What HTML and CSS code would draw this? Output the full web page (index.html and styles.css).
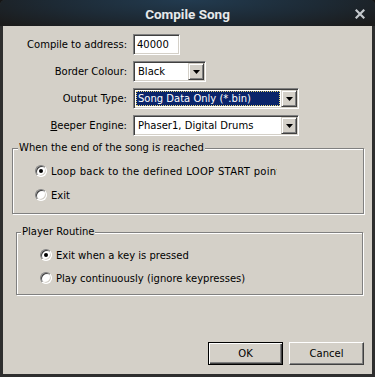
FILE: index.html
```html
<!DOCTYPE html>
<html lang="en">
<head>
    <meta charset="UTF-8">
    <meta name="viewport" content="width=device-width, initial-scale=1.0">
    <title>Compile Song</title>
    <link rel="stylesheet" href="styles.css">
</head>
<body>
    <div class="window">
        <div class="titlebar">
            <span class="title">Compile Song</span>
            <svg class="close" width="10" height="10" viewBox="0 0 10 10">
                <path d="M1.5 1.5 L8.5 8.5 M8.5 1.5 L1.5 8.5" stroke="#c4c8cc" stroke-width="2.2" stroke-linecap="square"/>
            </svg>
        </div>

        <div class="client">
            <div class="fields">
                <label class="field-label">Compile to address:</label>
                <div class="edit">40000</div>

                <label class="field-label">Border Colour:</label>
                <div class="combo combo-short">
                    <span class="combo-value">Black</span>
                    <span class="combo-btn"><svg width="7" height="4" viewBox="0 0 7 4"><path d="M0 0 H7 L3.5 4 Z" fill="#000"/></svg></span>
                </div>

                <label class="field-label">Output Type:</label>
                <div class="combo combo-long">
                    <span class="combo-value selected">Song Data Only (*.bin)</span>
                    <span class="combo-btn"><svg width="7" height="4" viewBox="0 0 7 4"><path d="M0 0 H7 L3.5 4 Z" fill="#000"/></svg></span>
                </div>

                <label class="field-label"><u>B</u>eeper Engine:</label>
                <div class="combo combo-long">
                    <span class="combo-value">Phaser1, Digital Drums</span>
                    <span class="combo-btn"><svg width="7" height="4" viewBox="0 0 7 4"><path d="M0 0 H7 L3.5 4 Z" fill="#000"/></svg></span>
                </div>
            </div>

            <fieldset class="group group-end">
                <legend>When the end of the song is reached</legend>
                <div class="options">
                    <div class="option"><span class="radio checked"></span><span class="option-text clipped">Loop back to the defined LOOP START point</span></div>
                    <div class="option"><span class="radio"></span><span class="option-text">Exit</span></div>
                </div>
            </fieldset>

            <fieldset class="group group-player">
                <legend>Player Routine</legend>
                <div class="options">
                    <div class="option"><span class="radio checked"></span><span class="option-text">Exit when a key is pressed</span></div>
                    <div class="option"><span class="radio"></span><span class="option-text">Play continuously (ignore keypresses)</span></div>
                </div>
            </fieldset>

            <div class="buttons">
                <button type="button" class="btn btn-default">OK</button>
                <button type="button" class="btn">Cancel</button>
            </div>
        </div>
    </div>
</body>
</html>
```

FILE: styles.css
```css
html, body {
    margin: 0;
    padding: 0;
    background: #151515;
}
.window {
    width: 375px;
    height: 377px;
    box-sizing: border-box;
    display: flex;
    flex-direction: column;
    background: #2e2e2e;
    border-radius: 5px 5px 0 0;
    overflow: hidden;
    padding: 0 3px 3px 3px;
    font-family: "DejaVu Sans", sans-serif;
    font-size: 10px;
    color: #000;
}
.titlebar {
    height: 26px;
    margin: 0 -3px;
    display: grid;
    grid-template-columns: 1fr auto 1fr;
    align-items: center;
    background: radial-gradient(ellipse 65% 140% at 50% 0%, #223b50 0%, #1d2a35 55%, #1b1b1b 100%);
}
.title {
    grid-column: 2;
    color: #e6e8ea;
    font-family: Roboto, "DejaVu Sans", sans-serif;
    font-weight: bold;
    font-size: 13.5px;
    padding-top: 1px;
}
.close {
    grid-column: 3;
    justify-self: end;
    margin-right: 10px;
    margin-top: 1px;
}
.client {
    flex: 1;
    background: #d4d0c8;
    display: flex;
    flex-direction: column;
    padding: 8px 0 9px 0;
}
.fields {
    display: grid;
    grid-template-columns: 124px auto;
    column-gap: 6px;
    row-gap: 6px;
    align-items: center;
    justify-items: start;
}
.field-label {
    justify-self: end;
    white-space: nowrap;
}
.edit, .combo {
    height: 21px;
    box-sizing: border-box;
    background: #fff;
    border: 1px solid;
    border-color: #808080 #fff #fff #808080;
    box-shadow: inset 1px 1px 0 #404040, inset -1px -1px 0 #d4d0c8;
}
.edit {
    width: 47px;
    padding: 1px 3px;
    line-height: 17px;
}
.combo {
    display: flex;
    padding: 1px;
}
.combo-short {
    width: 73px;
}
.combo-long {
    width: 166px;
}
.combo-value {
    flex: 1;
    margin: 1px;
    padding-left: 2px;
    line-height: 16px;
    white-space: nowrap;
    overflow: hidden;
}
.combo-value.selected {
    background: #0a246a;
    color: #fff;
    outline: 1px dotted #e8d878;
    outline-offset: -1px;
}
.combo-btn {
    width: 16px;
    box-sizing: border-box;
    background: #d4d0c8;
    border: 1px solid;
    border-color: #d4d0c8 #404040 #404040 #d4d0c8;
    box-shadow: inset 1px 1px 0 #fff, inset -1px -1px 0 #808080;
    display: flex;
    align-items: center;
    justify-content: center;
}
.group {
    border: 1px solid #808080;
    box-shadow: 1px 1px 0 #fff, inset 1px 1px 0 #fff;
    padding: 0;
    min-width: 0;
}
.group legend {
    padding: 0 1px;
    line-height: 12px;
    background: #d4d0c8;
    position: relative;
}
.group-end {
    margin: 6px 8px 0 9px;
}
.group-end legend {
    margin-left: 5px;
}
.group-end .options {
    padding: 9px 0 10px 22px;
    gap: 8px;
}
.group-player {
    margin: 12px 9px 0 13px;
}
.group-player legend {
    margin-left: 4px;
}
.group-player .options {
    padding: 9px 0 8px 23px;
    gap: 7px;
}
.options {
    display: flex;
    flex-direction: column;
}
.option {
    display: flex;
    align-items: center;
    gap: 4px;
    height: 16px;
}
.radio {
    width: 12px;
    height: 12px;
    box-sizing: border-box;
    border-radius: 50%;
    background: #fff;
    border: 1px solid;
    border-color: #808080 #fff #fff #808080;
    box-shadow: inset 1px 1px 0 #404040, inset -1px -1px 0 #d4d0c8;
    display: flex;
    align-items: center;
    justify-content: center;
}
.radio.checked::after {
    content: "";
    width: 4px;
    height: 4px;
    border-radius: 50%;
    background: #000;
}
.option-text {
    white-space: nowrap;
}
.option-text.clipped {
    width: 226px;
    overflow: hidden;
    letter-spacing: 0.3px;
}
.buttons {
    margin-top: auto;
    display: flex;
    justify-content: flex-end;
    gap: 6px;
    padding-right: 8px;
}
.btn {
    width: 75px;
    height: 23px;
    box-sizing: border-box;
    padding: 0;
    font-family: "DejaVu Sans", sans-serif;
    font-size: 10px;
    color: #000;
    background: #d4d0c8;
    border: 1px solid;
    border-color: #fff #404040 #404040 #fff;
    box-shadow: inset -1px -1px 0 #808080;
}
.btn-default {
    border: 1px solid #000;
    box-shadow: inset 1px 1px 0 #fff, inset -1px -1px 0 #404040, inset -2px -2px 0 #808080;
}
```
